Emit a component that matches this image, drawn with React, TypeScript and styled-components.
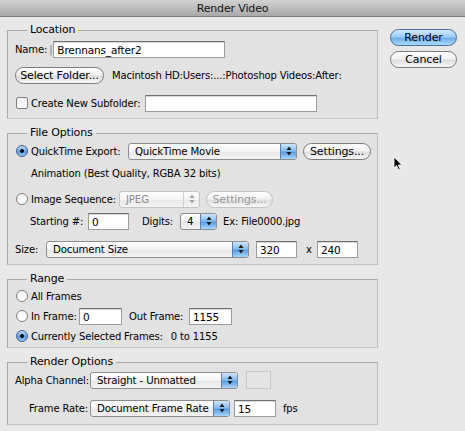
import * as React from 'react';
import styled, { createGlobalStyle, css } from 'styled-components';

const GlobalStyle = createGlobalStyle`
  html, body { margin: 0; padding: 0; background: #e8e8e8; }
  body { font-family: "DejaVu Sans", "Liberation Sans", sans-serif; font-size: 10px; letter-spacing: -0.15px; color: #000; }
  * { box-sizing: border-box; }
`;

const Window = styled.div`
  position: relative;
  width: 465px;
  height: 431px;
  background: #e8e8e8;
  overflow: hidden;
`;

const TitleBar = styled.div`
  height: 17px;
  background: linear-gradient(#d2d2d2, #a9a9a9);
  border-bottom: 1px solid #7d7d7d;
  display: flex;
  align-items: center;
  justify-content: center;
  font-size: 11px;
  color: #111;
  padding-top: 1px;
`;

const Body = styled.div`
  display: flex;
  padding: 0 0 0 7px;
`;

const Main = styled.div`
  width: 371px;
  display: flex;
  flex-direction: column;
  gap: 7px;
  padding-top: 6px;
`;

const Side = styled.div`
  flex: 1;
  display: flex;
  flex-direction: column;
  align-items: flex-end;
  gap: 5px;
  padding: 12px 8px 0 0;
`;

const Group = styled.fieldset<{ $pb?: number }>`
  margin: 0;
  border: 1px solid #a9a9a9;
  border-right-color: #bdbdbd;
  border-bottom-color: #c4c4c4;
  background: #e2e2e2;
  padding: 0 0 ${p => p.$pb ?? 0}px 7px;
  min-width: 0;
`;

const Legend = styled.legend`
  margin-left: 12px;
  padding: 0 3px;
  font-size: 11px;
  line-height: 14px;
  height: 14px;
`;

const Row = styled.div<{ $h?: number; $mt?: number; $indent?: number }>`
  display: flex;
  align-items: center;
  height: ${p => p.$h ?? 22}px;
  margin-top: ${p => p.$mt ?? 0}px;
  padding-left: ${p => p.$indent ?? 0}px;
  white-space: nowrap;
`;

const Label = styled.span<{ $w?: number; $ml?: number; $dim?: boolean }>`
  display: inline-block;
  ${p => p.$w && css`width: ${p.$w}px;`}
  margin-left: ${p => p.$ml ?? 0}px;
  color: ${p => (p.$dim ? '#777' : '#000')};
  flex-shrink: 0;
`;

const Field = styled.div<{ $w: number; $ml?: number; $h?: number }>`
  width: ${p => p.$w}px;
  height: ${p => p.$h ?? 17}px;
  margin-left: ${p => p.$ml ?? 0}px;
  background: #fff;
  border: 1px solid #9b9b9b;
  border-top-color: #6f6f6f;
  box-shadow: inset 0 1px 0 #d8d8d8;
  padding: 1px 3px 0 3px;
  font-size: 10.5px;
  line-height: 14px;
  flex-shrink: 0;
`;

const Swatch = styled.div`
  width: 25px;
  height: 18px;
  margin-left: 8px;
  border: 1px solid #c8c8c8;
  background: #e4e4e4;
`;

const Push = styled.div<{ $w: number; $ml?: number; $primary?: boolean; $disabled?: boolean }>`
  width: ${p => p.$w}px;
  height: 17px;
  margin-left: ${p => p.$ml ?? 0}px;
  border-radius: 9px;
  border: 1px solid ${p => (p.$disabled ? '#c2c2c2' : '#7a7a7a')};
  background: ${p =>
    p.$primary
      ? 'linear-gradient(#d3ebff 0%, #9ecdf6 45%, #6fb0ea 55%, #a9dafd 100%)'
      : 'linear-gradient(#ffffff 0%, #f1f1f1 45%, #dedede 55%, #f7f7f7 100%)'};
  ${p => p.$primary && css`border-color: #4a6e9c;`}
  color: ${p => (p.$disabled ? '#9a9a9a' : '#000')};
  display: flex;
  align-items: center;
  justify-content: center;
  font-size: 11px;
  flex-shrink: 0;
`;

const Popup = styled.div<{ $w: number; $ml?: number; $disabled?: boolean }>`
  width: ${p => p.$w}px;
  height: 17px;
  margin-left: ${p => p.$ml ?? 0}px;
  border: 1px solid ${p => (p.$disabled ? '#c4c4c4' : '#8d8d8d')};
  border-radius: 3px;
  background: linear-gradient(#ffffff 0%, #f3f3f3 50%, #e6e6e6 51%, #f4f4f4 100%);
  display: flex;
  align-items: stretch;
  color: ${p => (p.$disabled ? '#8a8a8a' : '#000')};
  flex-shrink: 0;
  overflow: hidden;
`;

const PopupText = styled.span`
  flex: 1;
  padding-left: 6px;
  line-height: 15px;
  font-size: 10.2px;
  overflow: hidden;
`;

const Arrows = styled.div<{ $disabled?: boolean }>`
  width: 16px;
  border-left: 1px solid ${p => (p.$disabled ? '#d0d0d0' : '#5a7fb0')};
  background: ${p =>
    p.$disabled
      ? 'transparent'
      : 'linear-gradient(#cfe6fb 0%, #86bcef 45%, #5a9ee3 55%, #a8d6fb 100%)'};
  display: flex;
  align-items: center;
  justify-content: center;
  flex-shrink: 0;
`;

const Radio = styled.span<{ $on?: boolean }>`
  width: 12px;
  height: 12px;
  border-radius: 50%;
  margin: 0 3px 0 1px;
  flex-shrink: 0;
  border: 1px solid ${p => (p.$on ? '#3a5f92' : '#7f7f7f')};
  background: ${p =>
    p.$on
      ? 'radial-gradient(circle, #111 0 1.6px, transparent 2.2px), linear-gradient(#bcdcf8, #5c9ce0 60%, #9fd0f8)'
      : 'linear-gradient(#f4f4f4, #ffffff)'};
`;

const Check = styled.span`
  width: 12px;
  height: 12px;
  margin: 0 3px 0 1px;
  border: 1px solid #7f7f7f;
  border-radius: 2px;
  background: linear-gradient(#f2f2f2, #ffffff);
  flex-shrink: 0;
`;

const Cursor = styled.svg`
  position: absolute;
  left: 393px;
  top: 156px;
`;

const StepArrows: React.FC<{ disabled?: boolean }> = ({ disabled }) => (
  <svg width="6" height="10" viewBox="0 0 6 10">
    <path d="M3 0.5 L5.5 4 L0.5 4 Z M3 9.5 L5.5 6 L0.5 6 Z" fill={disabled ? '#a0a0a0' : '#1a1a1a'} />
  </svg>
);

const PopupButton: React.FC<{ w: number; ml?: number; text: string; disabled?: boolean }> = ({ w, ml, text, disabled }) => (
  <Popup $w={w} $ml={ml} $disabled={disabled}>
    <PopupText>{text}</PopupText>
    <Arrows $disabled={disabled}>
      <StepArrows disabled={disabled} />
    </Arrows>
  </Popup>
);

export default function App() {
  return (
    <Window>
      <GlobalStyle />
      <TitleBar>Render Video</TitleBar>
      <Body>
        <Main>
          <Group $pb={1}>
            <Legend>Location</Legend>
            <Row $h={24}>
              <Label>Name:</Label>
              <Label $ml={2} $dim>|</Label>
              <Field $w={172} $ml={1}>Brennans_after2</Field>
            </Row>
            <Row $h={28}>
              <Push $w={89}>Select Folder...</Push>
              <Label $ml={8}>Macintosh HD:Users:...:Photoshop Videos:After:</Label>
            </Row>
            <Row $h={28}>
              <Check />
              <Label>Create New Subfolder:</Label>
              <Field $w={172} $ml={4} />
            </Row>
          </Group>

          <Group $pb={4}>
            <Legend>File Options</Legend>
            <Row>
              <Radio $on />
              <Label $w={97}>QuickTime Export:</Label>
              <PopupButton w={169} text="QuickTime Movie" />
              <Push $w={68} $ml={6}>Settings...</Push>
            </Row>
            <Row $indent={16}>Animation (Best Quality, RGBA 32 bits)</Row>
            <Row $mt={4}>
              <Radio />
              <Label $w={88}>Image Sequence:</Label>
              <PopupButton w={81} text="JPEG" disabled />
              <Push $w={67} $ml={6} $disabled>Settings...</Push>
            </Row>
            <Row $indent={15}>
              <Label $w={58}>Starting #:</Label>
              <Field $w={41}>0</Field>
              <Label $ml={13} $w={38}>Digits:</Label>
              <PopupButton w={37} text="4" />
              <Label $ml={6}>Ex: File0000.jpg</Label>
            </Row>
            <Row $mt={6}>
              <Label $w={31}>Size:</Label>
              <PopupButton w={203} text="Document Size" />
              <Field $w={41} $ml={7}>320</Field>
              <Label $ml={9} $w={11}>x</Label>
              <Field $w={41}>240</Field>
            </Row>
          </Group>

          <Group $pb={1}>
            <Legend>Range</Legend>
            <Row $h={20}>
              <Radio />
              <Label>All Frames</Label>
            </Row>
            <Row $h={20}>
              <Radio />
              <Label $w={48}>In Frame:</Label>
              <Field $w={43}>0</Field>
              <Label $ml={7} $w={60}>Out Frame:</Label>
              <Field $w={43}>1155</Field>
            </Row>
            <Row $h={20}>
              <Radio $on />
              <Label>Currently Selected Frames:</Label>
              <Label $ml={8}>0 to 1155</Label>
            </Row>
          </Group>

          <Group $pb={5}>
            <Legend>Render Options</Legend>
            <Row>
              <Label $w={75}>Alpha Channel:</Label>
              <PopupButton w={148} text="Straight - Unmatted" />
              <Swatch />
            </Row>
            <Row $mt={6} $indent={14}>
              <Label $w={61}>Frame Rate:</Label>
              <PopupButton w={140} text="Document Frame Rate" />
              <Field $w={42} $ml={4}>15</Field>
              <Label $ml={7}>fps</Label>
            </Row>
          </Group>
        </Main>
        <Side>
          <Push $w={67} $primary>Render</Push>
          <Push $w={67}>Cancel</Push>
        </Side>
      </Body>
      <Cursor width="10" height="15" viewBox="0 0 10 15">
        <path d="M1 1 L1 12 L3.6 9.6 L5.6 14 L7.2 13.3 L5.3 9 L8.8 9 Z" fill="#000" stroke="#fff" strokeWidth="0.8" />
      </Cursor>
    </Window>
  );
}
